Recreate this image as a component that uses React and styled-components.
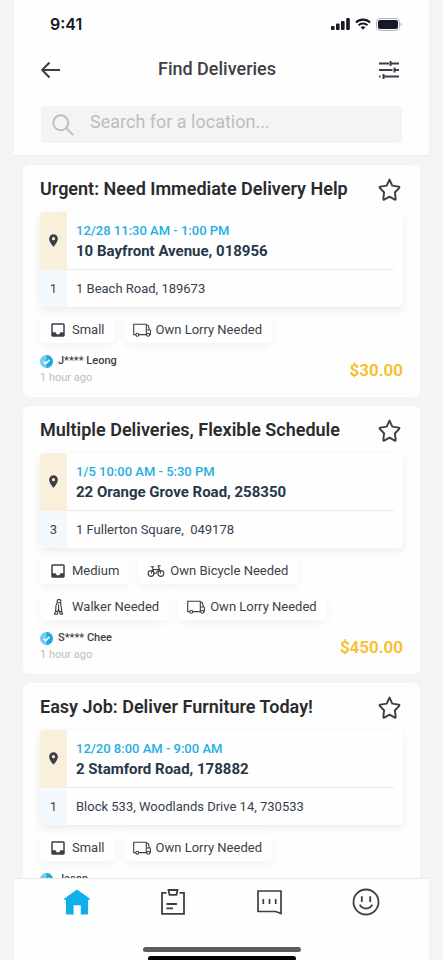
import React from 'react';
import styled, { createGlobalStyle } from 'styled-components';
import { MdInbox, MdLocationOn } from 'react-icons/md';

const GlobalStyle = createGlobalStyle`
  * {
    box-sizing: border-box;
  }
  body {
    margin: 0;
    background: #f4f4f4;
    color: #3d3f47;
    font-family: Roboto, "Liberation Sans", sans-serif;
  }
  button, input {
    font: inherit;
    color: inherit;
  }
`;

const Screen = styled.div`
  display: flex;
  flex-direction: column;
  height: 100vh;
  margin: 0 14px;
`;

const Header = styled.header`
  flex: none;
  padding: 12px 27px 12px;
  background: #fefefe;
  border-bottom: 1px solid #ececec;
`;

const StatusBar = styled.div`
  display: flex;
  align-items: center;
  justify-content: space-between;
  height: 24px;
  padding-left: 9px;
  color: #161a26;
  font: 600 16px/24px Inter, sans-serif;
`;

const StatusIcons = styled.div`
  display: flex;
  align-items: center;
  gap: 5px;
`;

const TitleBar = styled.div`
  display: flex;
  align-items: center;
  height: 36px;
  margin: 16px 0 18px;
  padding-right: 3px;
`;

const PageTitle = styled.h1`
  flex: 1;
  margin: 0;
  padding: 0 6px 2px 0;
  font-size: 18px;
  font-weight: 500;
  line-height: 24px;
  text-align: center;
`;

const IconButton = styled.button`
  display: flex;
  flex: none;
  padding: 0;
  border: 0;
  background: none;
  cursor: pointer;
`;

const SearchBox = styled.label`
  display: flex;
  align-items: center;
  gap: 16px;
  height: 37px;
  padding: 0 11px;
  border-radius: 4px;
  background: #f4f4f4;
  color: #bdbdbd;
`;

const SearchInput = styled.input`
  flex: 1;
  min-width: 0;
  padding: 0 0 6px;
  border: 0;
  outline: 0;
  background: none;
  color: #3d3f47;
  font-size: 18px;
  line-height: 24px;
  &::placeholder {
    color: #bdbdbd;
    opacity: 1;
  }
`;

const List = styled.main`
  display: flex;
  flex: 1;
  flex-direction: column;
  gap: 9px;
  min-height: 0;
  padding: 9px 9px 0;
  overflow: hidden;
`;

const Card = styled.article`
  flex: none;
  padding: 12px 17px 11px;
  border-radius: 6px;
  background: #fefefe;
`;

const CardHeader = styled.div`
  display: flex;
  align-items: center;
  justify-content: space-between;
  height: 25px;
  margin-bottom: 10px;
  padding-right: 2px;
`;

const CardTitle = styled.h2`
  margin: 0;
  padding-bottom: 2px;
  color: #2b2b2e;
  font-size: 18px;
  font-weight: 600;
  line-height: 24px;
`;

const Route = styled.div`
  display: grid;
  grid-template-columns: 27px 1fr;
  grid-template-rows: 58px 37px;
  margin-bottom: 9px;
  border-radius: 4px;
  overflow: hidden;
  background: #fefefe;
  box-shadow: 0 3px 8px rgba(0, 0, 0, 0.08);
`;

const RouteMark = styled.div`
  display: flex;
  align-items: center;
  justify-content: center;
  padding-bottom: ${props => (props.$pickup ? 2 : 0)}px;
  background: ${props => (props.$pickup ? '#faefda' : '#f4f9fd')};
  font-size: 13px;
`;

const Pickup = styled.div`
  margin-right: 9px;
  padding: 9px 0 0 9px;
  border-bottom: 1px solid #e9e9eb;
`;

const PickupTime = styled.div`
  color: #1fb0e2;
  font-size: 13px;
  font-weight: 500;
  line-height: 20px;
`;

const PickupAddress = styled.div`
  color: #27374a;
  font-size: 15px;
  font-weight: 700;
  line-height: 20px;
`;

const DropOff = styled.div`
  padding-left: 9px;
  color: #37414f;
  font-size: 13px;
  line-height: 38px;
  white-space: pre;
`;

const Chips = styled.ul`
  display: flex;
  flex-wrap: wrap;
  gap: 9px;
  margin: 0 0 10px;
  padding: 0;
  list-style: none;
`;

const Chip = styled.li`
  display: flex;
  align-items: center;
  gap: 5px;
  height: 27px;
  padding: 0 10px 0 9px;
  border-radius: 5px;
  background: #fefefe;
  box-shadow: 0 3px 8px rgba(0, 0, 0, 0.05);
  font-size: 13px;
`;

const CardFooter = styled.div`
  display: flex;
  align-items: center;
  justify-content: space-between;
`;

const Poster = styled.div`
  display: flex;
  align-items: center;
  gap: 5px;
  font-size: 11px;
  font-weight: 500;
  line-height: 16px;
`;

const Posted = styled.div`
  color: #bdbdbd;
  font-size: 11px;
  line-height: 17px;
`;

const Price = styled.div`
  color: #f9bd2a;
  font-size: 17px;
  font-weight: 600;
  line-height: 20px;
`;

const BottomBar = styled.footer`
  display: flex;
  flex: none;
  flex-direction: column;
  align-items: center;
  height: 82px;
  overflow: hidden;
  border-top: 1px solid #ececec;
  background: #fefefe;
`;

const Tabs = styled.nav`
  display: grid;
  grid-template-columns: repeat(4, 1fr);
  width: 100%;
  margin-bottom: 22px;
  padding: 0 15px;
`;

const Tab = styled.a`
  display: flex;
  align-items: center;
  justify-content: center;
  height: 46px;
  color: ${props => (props.$active ? '#0eb0ec' : '#3d3f47')};
`;

const HomeIndicator = styled.div`
  flex: none;
  width: ${props => (props.$dark ? 148 : 158)}px;
  height: 5px;
  margin-bottom: 4px;
  border-radius: 3px;
  background: ${props => (props.$dark ? '#000' : '#5c5c5c')};
`;

const Signal = () => (
  <svg width="19" height="12" viewBox="0 0 19 12" fill="currentColor">
    <rect x="0" y="8" width="3.6" height="4" rx="1" />
    <rect x="5" y="5.6" width="3.6" height="6.4" rx="1" />
    <rect x="10" y="3" width="3.6" height="9" rx="1" />
    <rect x="15.2" y="0" width="3.6" height="12" rx="1" />
  </svg>
);

const Wifi = () => (
  <svg width="16" height="12" viewBox="0 0 17 12" fill="none" stroke="currentColor" strokeWidth="2.2">
    <path d="M1 4.4a10.8 10.8 0 0 1 15 0" />
    <path d="M3.8 7.3a6.8 6.8 0 0 1 9.4 0" />
    <path d="M8.5 12 6 9.5a3.6 3.6 0 0 1 5 0z" fill="currentColor" stroke="none" />
  </svg>
);

const Battery = () => (
  <svg width="26" height="13" viewBox="0 0 26 13">
    <rect x="0.5" y="0.5" width="23" height="12" rx="3.5" fill="none" stroke="#b3b4b8" />
    <rect x="2" y="2" width="20" height="9" rx="2" fill="currentColor" />
    <path d="M24.6 4.6c1.6.7 1.6 3.1 0 3.8z" fill="#b3b4b8" />
  </svg>
);

const BackArrow = () => (
  <svg width="20" height="18" viewBox="0 0 20 18" fill="none" stroke="currentColor" strokeWidth="2">
    <path d="M19 9H1.5M8.5 1.5 1.2 9l7.3 7.5" />
  </svg>
);

const Filters = () => (
  <svg width="20" height="18" viewBox="0 0 20 18" fill="none" stroke="currentColor" strokeWidth="2">
    <path d="M0 2.5h10M12 2.5h8M11.5 0v5" />
    <path d="M0 9h13.5M16 9h4M15.5 6.5v5" />
    <path d="M0 15.5h1.5M4.5 15.5H20M4.5 13v5" />
  </svg>
);

const Magnifier = () => (
  <svg width="22" height="22" viewBox="0 0 22 22" fill="none" stroke="currentColor" strokeWidth="1.9">
    <circle cx="8.8" cy="8.8" r="7.5" />
    <path d="m14.2 14.2 7 7" />
  </svg>
);

const Star = () => (
  <svg width="23" height="23" viewBox="0 0 24 24" fill="none" stroke="currentColor" strokeWidth="2" strokeLinejoin="round">
    <path d="M12 1.6 14.9 8l6.8 1c.7.1.9.8.4 1.3l-4.5 4.8.9 6.8c.1.6-.5.9-1 .7L12 19.5l-5.5 3.1c-.5.2-1.1-.1-1-.7l.9-6.8-4.5-4.8c-.5-.5-.3-1.2.4-1.3l6.8-1z" />
  </svg>
);

const Lorry = () => (
  <svg width="18" height="14" viewBox="0 0 18 14" fill="none" stroke="currentColor" strokeWidth="1.1" strokeLinejoin="round">
    <path d="M2.7 11.6H.7V1.2h12.6v10.4H6" />
    <path d="M13.3 2.2h1.2q.7 0 .9.8l.9 3.5 1.1.9v4.2h-.7M13.3 7h2.9M12.6 11.6h1" />
    <circle cx="4.3" cy="11.8" r="1.5" />
    <circle cx="15.2" cy="11.8" r="1.5" />
  </svg>
);

const Bicycle = () => (
  <svg width="18" height="14" viewBox="0 0 18 14" fill="none" stroke="currentColor" strokeWidth="1.1">
    <circle cx="4" cy="9.5" r="2.9" />
    <circle cx="13.9" cy="9.5" r="2.9" />
    <path d="M4 9.5 6 5.5h5.5L8.8 9.5H7L5.4 2.8M3.6 2.8h3.6M13.9 9.5 11.2 1.7h2.4" />
  </svg>
);

const Walker = () => (
  <svg width="18" height="16" viewBox="0 0 18 16" fill="none" stroke="currentColor" strokeWidth="1.1" strokeLinejoin="round">
    <path d="M8.2 3.8V1.6Q8.4.6 9.6.6h1.2q1 0 1 1.2v2" />
    <path d="M8.2 3.8h3.4l.8 5.2.4 4 .8 2.2h-2.4L9.6 9.8l-1.4 5.4H5.4l1.3-3 .2-5.4z" />
    <path d="M9.6 5.2v4.6M6.6 12.2l2 .4M11 12.6h1.8" />
  </svg>
);

const Verified = () => (
  <svg width="13" height="13" viewBox="0 0 13 13">
    <circle cx="6.5" cy="6.5" r="6.5" fill="#6fcdf2" />
    <path d="M6.5 0a6.5 6.5 0 0 1 0 13z" fill="#1fa9dc" />
    <path d="m3.6 6.6 2.1 2.1 3.8-3.8" fill="none" stroke="#fff" strokeWidth="1.6" />
  </svg>
);

const Home = () => (
  <svg width="26" height="26" viewBox="0 0 26 26" fill="currentColor">
    <path d="M13 .5 26 9.8l-.8 1.2h-1.1v13.5q0 1-1 1h-6.3v-9.3H9.6v9.3H3q-1 0-1-1V11H.8L0 9.8z" />
  </svg>
);

const Clipboard = () => (
  <svg width="24" height="26" viewBox="0 0 24 26" fill="none" stroke="currentColor" strokeWidth="1.8">
    <path d="M5.5 3.8H1v21h22v-21h-4.5" />
    <path d="M7.5 1h9l-1 4.8h-7zM5.5 15h10.5M5.5 19.3h6.5" />
  </svg>
);

const Chat = () => (
  <svg width="25" height="25" viewBox="0 0 25 25" fill="none" stroke="currentColor" strokeWidth="1.7">
    <path d="M1 1h23v22.5l-5.2-2H1z" />
    <path d="M6.3 9v5M12.5 9v5M18.7 9v5" />
  </svg>
);

const Smiley = () => (
  <svg width="28" height="28" viewBox="0 0 28 28" fill="none" stroke="currentColor" strokeWidth="1.8">
    <circle cx="14" cy="14" r="12.5" />
    <path d="M9.8 8.3v5.6M18.2 8.3v5.6M7.8 16.6c2.6 5.2 9.8 5.2 12.4 0" />
  </svg>
);

const CHIP_ICONS = {
  size: <MdInbox size={18} />,
  lorry: <Lorry />,
  bicycle: <Bicycle />,
  walker: <Walker />,
};

const jobs = [
  {
    title: 'Urgent: Need Immediate Delivery Help',
    time: '12/28 11:30 AM - 1:00 PM',
    pickup: '10 Bayfront Avenue, 018956',
    stops: 1,
    dropOff: '1 Beach Road, 189673',
    chips: [['size', 'Small'], ['lorry', 'Own Lorry Needed']],
    poster: 'J**** Leong',
    posted: '1 hour ago',
    price: '$30.00',
  },
  {
    title: 'Multiple Deliveries, Flexible Schedule',
    time: '1/5 10:00 AM - 5:30 PM',
    pickup: '22 Orange Grove Road, 258350',
    stops: 3,
    dropOff: '1 Fullerton Square,  049178',
    chips: [
      ['size', 'Medium'],
      ['bicycle', 'Own Bicycle Needed'],
      ['walker', 'Walker Needed'],
      ['lorry', 'Own Lorry Needed'],
    ],
    poster: 'S**** Chee',
    posted: '1 hour ago',
    price: '$450.00',
  },
  {
    title: 'Easy Job: Deliver Furniture Today!',
    time: '12/20 8:00 AM - 9:00 AM',
    pickup: '2 Stamford Road, 178882',
    stops: 1,
    dropOff: 'Block 533, Woodlands Drive 14, 730533',
    chips: [['size', 'Small'], ['lorry', 'Own Lorry Needed']],
    poster: 'Jason',
  },
];

const JobCard = ({ job }) => (
  <Card>
    <CardHeader>
      <CardTitle>{job.title}</CardTitle>
      <IconButton aria-label="Save job"><Star /></IconButton>
    </CardHeader>
    <Route>
      <RouteMark $pickup><MdLocationOn size={15} /></RouteMark>
      <Pickup>
        <PickupTime>{job.time}</PickupTime>
        <PickupAddress>{job.pickup}</PickupAddress>
      </Pickup>
      <RouteMark>{job.stops}</RouteMark>
      <DropOff>{job.dropOff}</DropOff>
    </Route>
    <Chips>
      {job.chips.map(([icon, label]) => (
        <Chip key={label}>
          {CHIP_ICONS[icon]}
          {label}
        </Chip>
      ))}
    </Chips>
    <CardFooter>
      <div>
        <Poster><Verified />{job.poster}</Poster>
        {job.posted && <Posted>{job.posted}</Posted>}
      </div>
      {job.price && <Price>{job.price}</Price>}
    </CardFooter>
  </Card>
);

const App = () => (
  <>
    <GlobalStyle />
    <Screen>
      <Header>
        <StatusBar>
          <span>9:41</span>
          <StatusIcons>
            <Signal />
            <Wifi />
            <Battery />
          </StatusIcons>
        </StatusBar>
        <TitleBar>
          <IconButton aria-label="Back"><BackArrow /></IconButton>
          <PageTitle>Find Deliveries</PageTitle>
          <IconButton aria-label="Filters"><Filters /></IconButton>
        </TitleBar>
        <SearchBox>
          <Magnifier />
          <SearchInput type="text" aria-label="Search" placeholder="Search for a location..." />
        </SearchBox>
      </Header>
      <List>
        {jobs.map(job => <JobCard key={job.title} job={job} />)}
      </List>
      <BottomBar>
        <Tabs>
          <Tab href="#home" aria-label="Home" $active><Home /></Tab>
          <Tab href="#jobs" aria-label="Jobs"><Clipboard /></Tab>
          <Tab href="#chat" aria-label="Chat"><Chat /></Tab>
          <Tab href="#profile" aria-label="Profile"><Smiley /></Tab>
        </Tabs>
        <HomeIndicator />
        <HomeIndicator $dark />
      </BottomBar>
    </Screen>
  </>
);

export default App;
